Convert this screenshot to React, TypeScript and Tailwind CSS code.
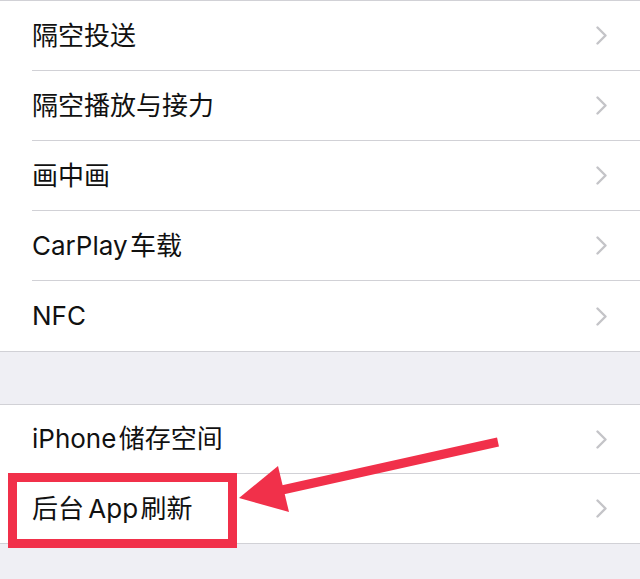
import React from 'react';

const FONT = { fontFamily: 'Inter, "Noto Sans CJK SC", sans-serif' };

const Chevron: React.FC = () => (
  <svg width="11" height="19" viewBox="0 0 11 19" className="shrink-0">
    <polyline points="1.5,1.5 9.5,9.5 1.5,17.5" fill="none" stroke="#c4c4c8" strokeWidth="2.4" strokeLinecap="round" strokeLinejoin="round" />
  </svg>
);

const Row: React.FC<{ label: string; h: string; last?: boolean }> = ({ label, h, last }) => (
  <div className={`flex items-center pl-[32px] ${h}`}>
    <div className={`flex h-full flex-1 items-center pr-[33px] ${last ? '' : 'border-b border-[#d1d1d6]'}`}>
      <span className="flex-1 text-[26px] leading-none text-[#111]">{label}</span>
      <Chevron />
    </div>
  </div>
);

export default function App() {
  // hair spaces between latin and CJK, as iOS renders them
  const group1 = ['隔空投送', '隔空播放与接力', '画中画', 'CarPlay\u200a车载', 'NFC'];
  const group2 = ['iPhone\u200a储存空间', '后台\u2006App\u200a刷新'];

  return (
    <div className="relative min-h-[579px] w-[640px] overflow-hidden bg-[#efeff4]" style={FONT}>
      {/* first group */}
      <div className="border-y border-[#d1d1d6] bg-white">
        {group1.map((label, i) => (
          <Row key={label} label={label} h="h-[70px]" last={i === group1.length - 1} />
        ))}
      </div>

      <div className="h-[52px]" />

      {/* second group */}
      <div className="border-y border-[#d1d1d6] bg-white">
        {group2.map((label, i) => (
          <Row key={label} label={label} h="h-[69px]" last={i === group2.length - 1} />
        ))}
      </div>

      {/* annotation: red box */}
      <div className="absolute left-[8px] top-[473px] h-[75px] w-[229px] border-[9px] border-[#f1304a]" />

      {/* annotation: arrow */}
      <svg className="pointer-events-none absolute left-0 top-0" width="640" height="579">
        <line x1="498" y1="442" x2="282" y2="490" stroke="#f1304a" strokeWidth="9" />
        <polygon points="239,498 278,466 289,512" fill="#f1304a" />
      </svg>
    </div>
  );
}
